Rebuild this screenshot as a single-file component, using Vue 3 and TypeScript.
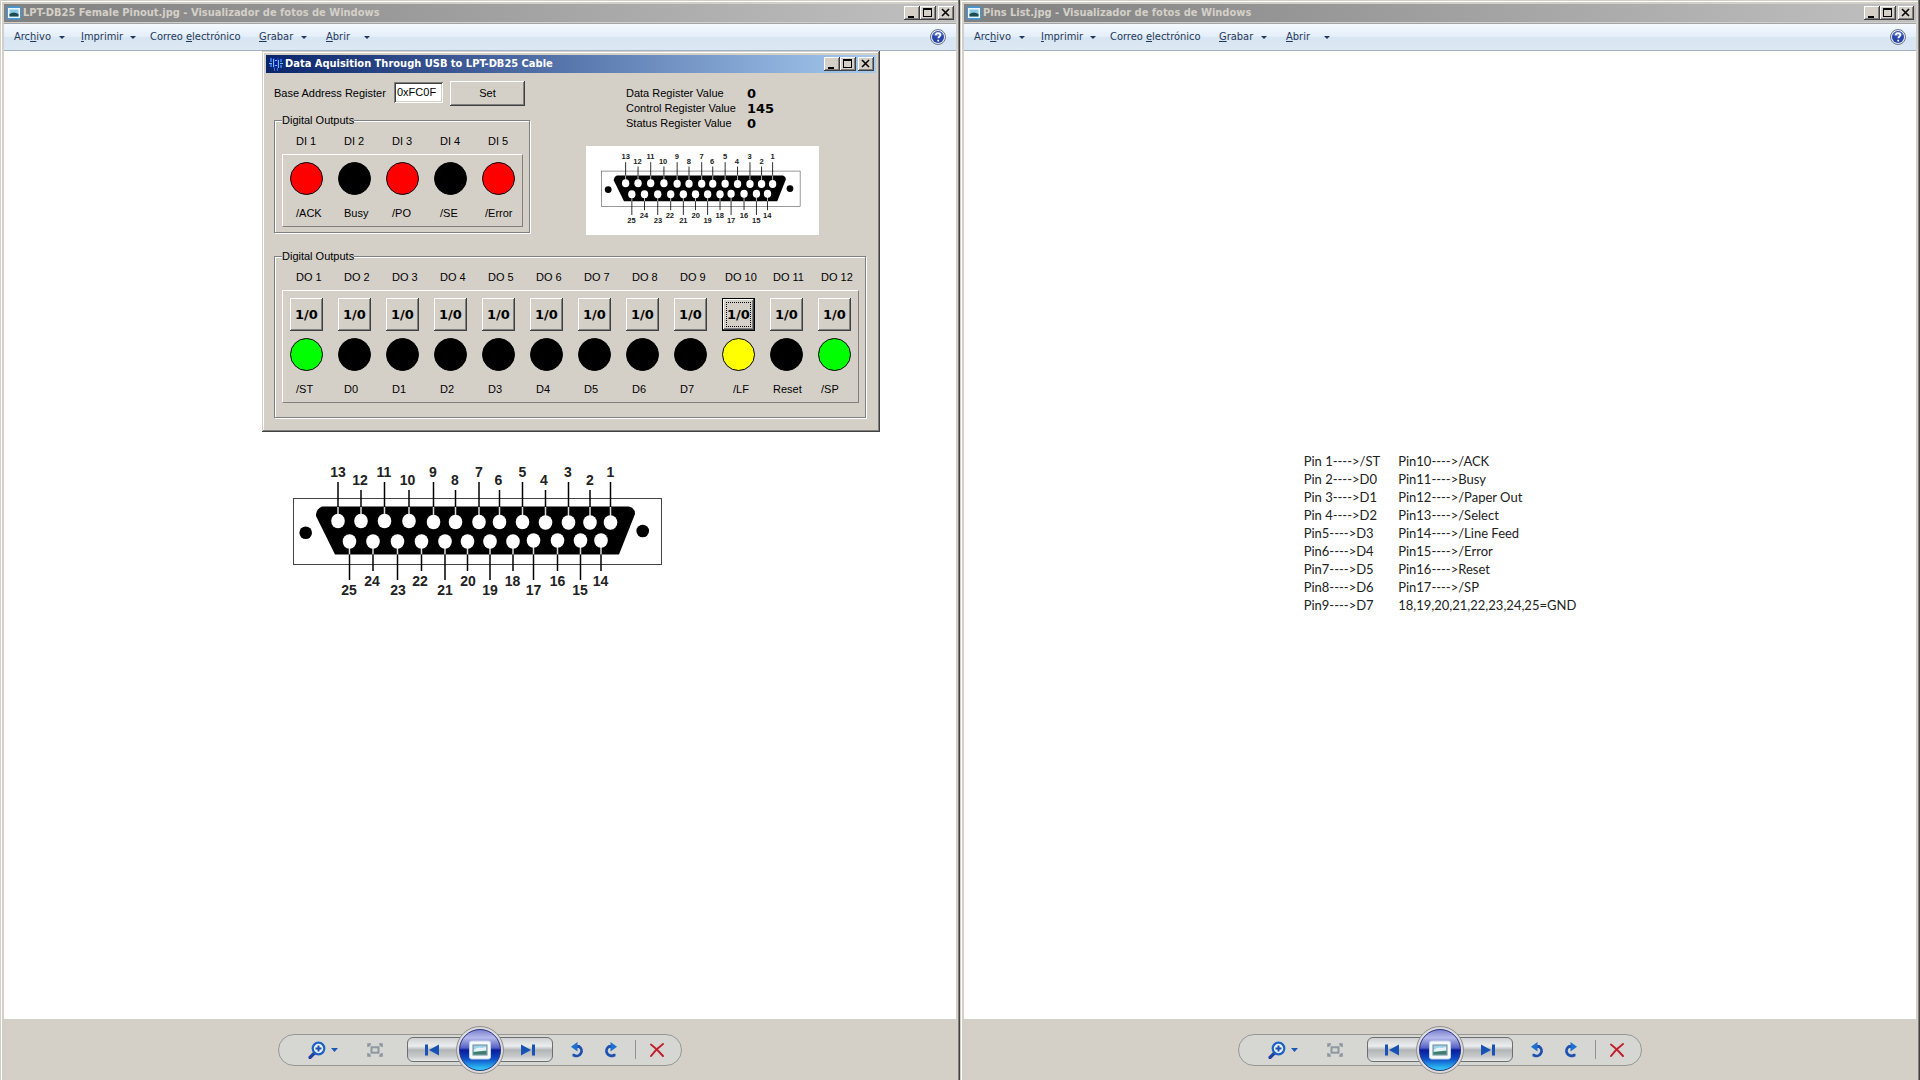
<script setup lang="ts">
import { h, ref } from 'vue'

interface Viewer { file: string; kind: 'connector' | 'list' }
interface MenuEntry { before: string; key: string; after: string; drop: boolean; cls: string }
interface Channel { name: string; caption: string; color: string; nameCls?: string; captionCls?: string }
interface Pin { n: number; x: number; y: number; tx: number }

const viewers: Viewer[] = [
  { file: 'LPT-DB25 Female Pinout.jpg', kind: 'connector' },
  { file: 'Pins List.jpg', kind: 'list' },
]

const menus: MenuEntry[] = [
  { before: 'Arc', key: 'h', after: 'ivo', drop: true, cls: 'm-file' },
  { before: '', key: 'I', after: 'mprimir', drop: true, cls: 'm-print' },
  { before: 'Correo ', key: 'e', after: 'lectrónico', drop: false, cls: 'm-mail' },
  { before: '', key: 'G', after: 'rabar', drop: true, cls: 'm-burn' },
  { before: '', key: 'A', after: 'brir', drop: true, cls: 'm-open' },
]

const pinRows: [string, string][] = [
  ['Pin 1---->/ST', 'Pin10---->/ACK'],
  ['Pin 2---->D0', 'Pin11---->Busy'],
  ['Pin 3---->D1', 'Pin12---->/Paper Out'],
  ['Pin 4---->D2', 'Pin13---->/Select'],
  ['Pin5---->D3', 'Pin14---->/Line Feed'],
  ['Pin6---->D4', 'Pin15---->/Error'],
  ['Pin7---->D5', 'Pin16---->Reset'],
  ['Pin8---->D6', 'Pin17---->/SP'],
  ['Pin9---->D7', '18,19,20,21,22,23,24,25=GND'],
]

const baseAddress = ref('0xFC0F')

const registers = [
  { name: 'Data Register Value', value: 0 },
  { name: 'Control Register Value', value: 145 },
  { name: 'Status Register Value', value: 0 },
]

const inputs: Channel[] = [
  { name: 'DI 1', caption: '/ACK', color: 'red' },
  { name: 'DI 2', caption: 'Busy', color: 'black' },
  { name: 'DI 3', caption: '/PO', color: 'red' },
  { name: 'DI 4', caption: '/SE', color: 'black' },
  { name: 'DI 5', caption: '/Error', color: 'red', captionCls: 'tight' },
]

const outputs: Channel[] = [
  { name: 'DO 1', caption: '/ST', color: 'lime' },
  ...[2, 3, 4, 5, 6, 7, 8, 9].map((n) => ({ name: `DO ${n}`, caption: `D${n - 2}`, color: 'black' })),
  { name: 'DO 10', caption: '/LF', color: 'yellow', nameCls: 'tight', captionCls: 'late' },
  { name: 'DO 11', caption: 'Reset', color: 'black', nameCls: 'tight', captionCls: 'tight' },
  { name: 'DO 12', caption: '/SP', color: 'lime', nameCls: 'tight', captionCls: 'tight' },
]
const focused = 'DO 10'

const topPins: Pin[] = [
  { n: 13, x: 58, y: 71, tx: 58 }, { n: 12, x: 81, y: 71, tx: 80 }, { n: 11, x: 104.5, y: 71, tx: 104 },
  { n: 10, x: 129, y: 71, tx: 127.5 }, { n: 9, x: 153.5, y: 72, tx: 153 }, { n: 8, x: 175.5, y: 72, tx: 175 },
  { n: 7, x: 199, y: 72, tx: 199 }, { n: 6, x: 219.5, y: 72, tx: 218.5 }, { n: 5, x: 242.5, y: 72, tx: 242.5 },
  { n: 4, x: 265.5, y: 72.5, tx: 264 }, { n: 3, x: 288.5, y: 72.5, tx: 288 }, { n: 2, x: 310, y: 72.5, tx: 310 },
  { n: 1, x: 330.5, y: 72.5, tx: 330.5 },
]
const bottomPins: Pin[] = [
  { n: 25, x: 69.5, y: 91.5, tx: 69 }, { n: 24, x: 93, y: 91.5, tx: 92 }, { n: 23, x: 117.5, y: 91.5, tx: 118 },
  { n: 22, x: 141.5, y: 91.5, tx: 140 }, { n: 21, x: 165, y: 91.5, tx: 165 }, { n: 20, x: 187.5, y: 91.5, tx: 188 },
  { n: 19, x: 210, y: 91.5, tx: 210 }, { n: 18, x: 233, y: 91.5, tx: 232.5 }, { n: 17, x: 253.5, y: 90.5, tx: 253.5 },
  { n: 16, x: 277.5, y: 90.5, tx: 277.5 }, { n: 15, x: 300.5, y: 90.5, tx: 300 }, { n: 14, x: 321, y: 90.5, tx: 320.5 },
]

// DB25 female connector drawing, shared by the photo and the thumbnail in the panel
const Db25 = (props: { box: string }) => {
  const wire = (x: number, y1: number, y2: number, stroke: string) =>
    h('line', { x1: x, x2: x, y1, y2, stroke, 'stroke-width': 1.5 })
  const label = (p: Pin, y: number) =>
    h('text', { x: p.tx, y, 'text-anchor': 'middle', 'font-size': 14, 'font-weight': 'bold', 'font-family': '"Liberation Sans", Arial, sans-serif', fill: '#222' }, String(p.n))
  const hole = (p: Pin) => h('ellipse', { cx: p.x, cy: p.y, rx: 6.8, ry: 7.3, fill: '#fff' })
  return h('svg', { viewBox: props.box, role: 'img', 'aria-label': 'DB25' }, [
    h('rect', { x: 13.5, y: 48.5, width: 368, height: 66, fill: 'none', stroke: '#444', 'stroke-width': 1 }),
    h('circle', { cx: 25.7, cy: 82.7, r: 6.3 }),
    h('circle', { cx: 362.7, cy: 81, r: 6.3 }),
    h('path', { d: 'M42 56.5H349Q355 58 355 64L339 104.5H55L36 66Q36 59 42 56.5Z' }),
    ...topPins.flatMap((p) => [
      wire(p.x, p.n % 2 ? 32 : 40, 57, '#000'), wire(p.x, 57, p.y, '#ddd'), hole(p), label(p, p.n % 2 ? 27 : 35),
    ]),
    ...bottomPins.flatMap((p) => [
      wire(p.x, p.y, 104.5, '#ddd'), wire(p.x, 104.5, p.n % 2 ? 130 : 121, '#000'), hole(p), label(p, p.n % 2 ? 145 : 136),
    ]),
  ])
}
Db25.props = ['box']
</script>

<template>
  <main class="desktop">
    <section v-for="v in viewers" :key="v.file" class="viewer">
      <header class="titlebar inactive">
        <svg class="title-icon" viewBox="0 0 16 16" aria-hidden="true">
          <rect x="1" y="1.5" width="14" height="13" rx="1" fill="#3d9ae0" />
          <rect x="2" y="3" width="12" height="10" fill="#eef6fb" />
          <rect x="3.5" y="4.5" width="9" height="7" fill="#8cc8e6" />
          <path d="M3.5 11.5V9q4-3 9 0v2.5z" fill="#1f4a50" />
        </svg>
        <h1>{{ v.file }} - Visualizador de fotos de Windows</h1>
        <button class="cap" type="button" aria-label="Minimizar"><svg viewBox="0 0 16 14"><path d="M4 10h6v2H4z" /></svg></button>
        <button class="cap" type="button" aria-label="Maximizar"><svg viewBox="0 0 16 14"><path fill-rule="evenodd" d="M3 2h9v9H3zM4 4v6h7V4z" /></svg></button>
        <button class="cap close" type="button" aria-label="Cerrar"><svg viewBox="0 0 16 14"><path d="M4 3l7 7M11 3l-7 7" stroke="#000" stroke-width="1.6" /></svg></button>
      </header>
      <nav class="menubar">
        <button v-for="m in menus" :key="m.key" type="button" class="menu" :class="m.cls">
          <span>{{ m.before }}<u>{{ m.key }}</u>{{ m.after }}</span>
          <svg v-if="m.drop" class="caret" viewBox="0 0 6 3" aria-hidden="true"><path d="M0 0h6L3 3z" fill="#1e395b" /></svg>
        </button>
        <button type="button" class="help" aria-label="Ayuda">
          <svg viewBox="0 0 16 16">
            <circle cx="8" cy="8" r="7.5" fill="#e6e9f0" stroke="#6a7590" />
            <circle cx="8" cy="8" r="6" fill="#2746a8" />
            <path d="M3 6a5.5 5.5 0 0 1 10 0Q8 9 3 6Z" fill="#5a7bd0" />
            <path d="M5.8 6.3q.1-2.2 2.3-2.2 2.2.1 2.2 1.9 0 1-1 1.7-1 .7-1 1.6M8.2 10.8v1.6" fill="none" stroke="#fff" stroke-width="1.7" />
          </svg>
        </button>
      </nav>
      <div class="canvas">
        <Db25 v-if="v.kind === 'connector'" class="photo" box="0 0 400 170" />
        <table v-else class="pins">
          <tbody>
            <tr v-for="r in pinRows" :key="r[0]"><td>{{ r[0] }}</td><td>{{ r[1] }}</td></tr>
          </tbody>
        </table>
      </div>
      <footer class="toolbar">
        <div class="pill">
          <button type="button" class="tool zoom" aria-label="Zoom">
            <svg viewBox="0 0 30 18">
              <path d="M6.5 12L2 16.5" stroke="#22409c" stroke-width="3.2" stroke-linecap="round" />
              <circle cx="10.500" cy="7.5" r="5.8" fill="#e8f0f8" stroke="#1d62c4" stroke-width="2.2" />
              <path d="M10.5 4.5v6M7.5 7.5h6" stroke="#1a50b8" stroke-width="2" />
              <path d="M23 7h7l-3.5 4z" fill="#1d58b4" />
            </svg>
          </button>
          <button type="button" class="tool fit" aria-label="Ajustar">
            <svg viewBox="0 0 16 14" fill="none" stroke="#8d97a2" stroke-width="1.6">
              <rect x="4.5" y="4.3" width="7" height="5.4" stroke-width="2" />
              <path d="M1 4V1h3M12 1h3v3M15 10v3h-3M4 13H1v-3M1 1l2 2M15 1l-2 2M15 13l-2-2M1 13l2-2" />
            </svg>
          </button>
          <div class="nav">
            <button type="button" class="seg prev" aria-label="Anterior">
              <svg viewBox="0 0 14 12"><path d="M0 .5h3v11H0zM14 .5v11L4 6z" fill="#1752b5" /></svg>
            </button>
            <button type="button" class="orb" aria-label="Presentación">
              <svg viewBox="0 0 50 50">
                <defs>
                  <linearGradient id="ball" x1="0" y1="0" x2="0" y2="1">
                    <stop offset="0" stop-color="#7a7fd0" /><stop offset=".2" stop-color="#b5b9ea" />
                    <stop offset=".45" stop-color="#5560c4" /><stop offset=".5" stop-color="#0a1c9a" />
                    <stop offset=".72" stop-color="#0d4fc8" /><stop offset="1" stop-color="#35d8ff" />
                  </linearGradient>
                </defs>
                <circle cx="25" cy="25" r="23.5" fill="#d9dad9" stroke="#8e8f92" />
                <circle cx="25" cy="25" r="20.5" fill="url(#ball)" stroke="#2a3484" />
                <rect x="14.5" y="16" width="21" height="18" rx="2" fill="#f6f9fc" stroke="#c4d2e6" />
                <rect x="18" y="20" width="14" height="10" fill="#9fd0ea" stroke="#6b8c96" />
                <path d="M18.500 29.5V27q6-1 13-1v3.5z" fill="#3f7d6a" />
                <path d="M19 25q4-3.5 8-2l4-1v3q-5 1-12 1.500z" fill="#e8f4f8" />
              </svg>
            </button>
            <button type="button" class="seg next" aria-label="Siguiente">
              <svg viewBox="0 0 14 12"><path d="M11 .5h3v11h-3zM0 .5v11L10 6z" fill="#1752b5" /></svg>
            </button>
          </div>
          <button type="button" class="tool ccw" aria-label="Girar a la izquierda">
            <svg viewBox="0 0 14 16"><path d="M4 4.500H8A4.7 4.7 0 1 1 3 13.2H1.5" fill="none" stroke="#1f50b0" stroke-width="2.8" /><path d="M0 4.8L6.5 0v9.5z" fill="#1e70d0" /></svg>
          </button>
          <button type="button" class="tool cw" aria-label="Girar a la derecha">
            <svg viewBox="0 0 14 16"><path d="M10 4.5H6A4.7 4.7 0 1 0 11 13.2H12.5" fill="none" stroke="#1f50b0" stroke-width="2.8" /><path d="M14 4.8L7.5 0v9.5z" fill="#1e70d0" /></svg>
          </button>
          <span class="rule"></span>
          <button type="button" class="tool del" aria-label="Eliminar">
            <svg viewBox="0 0 14 14"><path d="M1 1.5Q7 6 13 13M13 1Q6 6 1 13" fill="none" stroke="#c0202c" stroke-width="2" stroke-linecap="round" /></svg>
          </button>
        </div>
      </footer>
    </section>

    <section class="panel-window">
      <header class="titlebar active">
        <svg class="title-icon" viewBox="0 0 16 16" fill="none" aria-hidden="true">
          <path d="M2 2h2v4H2zM2 8h2v3H2zM12 3h2v3h-2zM12 9h2v3h-2zM6 12h1v3H6zM9 12h1v3H9z" fill="#2f6fe0" />
          <rect x="5" y="2" width="2" height="10" fill="#1530d8" /><rect x="9" y="2" width="2" height="10" fill="#1530d8" />
          <path d="M7 4.5h2M7 9.500h2M5.5 3v8M10.5 4v8M1 7.5h3M12 7.5h3" stroke="#6fc0ff" />
        </svg>
        <h1>Data Aquisition Through USB to LPT-DB25 Cable</h1>
        <button class="cap" type="button" aria-label="Minimize"><svg viewBox="0 0 16 14"><path d="M4 10h6v2H4z" /></svg></button>
        <button class="cap" type="button" aria-label="Maximize"><svg viewBox="0 0 16 14"><path fill-rule="evenodd" d="M3 2h9v9H3zM4 4v6h7V4z" /></svg></button>
        <button class="cap close" type="button" aria-label="Close"><svg viewBox="0 0 16 14"><path d="M4 3l7 7M11 3l-7 7" stroke="#000" stroke-width="1.6" /></svg></button>
      </header>
      <div class="client">
        <div class="upper">
          <div class="left">
            <form class="address" @submit.prevent>
              <label for="base">Base Address Register</label>
              <input id="base" v-model="baseAddress" type="text" />
              <button type="submit" class="btn set">Set</button>
            </form>
            <fieldset class="group">
              <legend>Digital Outputs</legend>
              <div class="names">
                <span v-for="c in inputs" :key="c.name" :class="c.nameCls">{{ c.name }}</span>
              </div>
              <div class="bay">
                <div v-for="c in inputs" :key="c.name" class="channel">
                  <i class="led" :class="c.color"></i>
                  <span class="caption" :class="c.captionCls">{{ c.caption }}</span>
                </div>
              </div>
            </fieldset>
          </div>
          <div class="right">
            <dl class="registers">
              <template v-for="r in registers" :key="r.name">
                <dt>{{ r.name }}</dt><dd>{{ r.value }}</dd>
              </template>
            </dl>
            <Db25 class="thumb" box="-15 2 431 165" />
          </div>
        </div>
        <fieldset class="group tall">
          <legend>Digital Outputs</legend>
          <div class="names">
            <span v-for="c in outputs" :key="c.name" :class="c.nameCls">{{ c.name }}</span>
          </div>
          <div class="bay">
            <div v-for="c in outputs" :key="c.name" class="channel">
              <button type="button" class="btn toggle" :class="{ focused: c.name === focused }" :aria-label="c.name">1/0</button>
              <i class="led" :class="c.color"></i>
              <span class="caption" :class="c.captionCls">{{ c.caption }}</span>
            </div>
          </div>
        </fieldset>
      </div>
    </section>
  </main>
</template>

<style>
body {
  margin: 0;
  background: #d4d0c8;
}
</style>

<style scoped>
* {
  box-sizing: border-box;
}
button,
input {
  margin: 0;
  padding: 0;
  border: 0;
  border-radius: 0;
  background: none;
  font: inherit;
  color: inherit;
}
svg {
  display: block;
}
.desktop {
  position: relative;
  display: grid;
  grid-template-columns: 1fr 1fr;
  min-height: 100vh;
  font: 11px/14px "Liberation Sans", Arial, sans-serif;
  color: #000;
}
.viewer {
  display: flex;
  flex-direction: column;
  padding: 4px 4px 0;
  background: #d4d0c8;
  box-shadow: inset -1px 0 #404040, inset -2px 0 #808080, inset 0 1px #d4d0c8, inset 1px 0 #d4d0c8, inset 2px 2px #fff;
}
.titlebar {
  display: flex;
  align-items: center;
  height: 18px;
  padding: 0 2px;
}
.inactive {
  background: linear-gradient(to right, #808080, #c0c0c0);
  color: #d4d0c8;
}
.active {
  background: linear-gradient(to right, #0a246a, #a6caf0);
  color: #fff;
}
.title-icon {
  width: 16px;
  height: 16px;
  margin-right: 1px;
}
.titlebar h1 {
  flex: 1;
  margin: 0;
  font: bold 11px/18px "DejaVu Sans Condensed", "DejaVu Sans", sans-serif;
  white-space: nowrap;
}
.cap {
  width: 16px;
  height: 14px;
  background: #d4d0c8;
  box-shadow: inset -1px -1px #404040, inset 1px 1px #fff, inset -2px -2px #808080;
}
.cap svg {
  width: 16px;
  height: 14px;
}
.close {
  margin-left: 2px;
}
.menubar {
  display: flex;
  align-items: center;
  height: 28px;
  margin-top: 1px;
  padding: 0 10px;
  border-top: 1px solid #a0a4ac;
  border-bottom: 1px solid #a3b1c6;
  background: linear-gradient(#f6faff, #e4eefa 48%, #d8e5f2 50%, #dbe8f4);
  color: #1e395b;
  font: 11px/16px "DejaVu Sans Condensed", "DejaVu Sans", sans-serif;
}
.menu {
  display: flex;
  align-items: center;
  justify-content: space-between;
  white-space: nowrap;
}
.m-file {
  width: 51px;
  margin-right: 16px;
}
.m-print {
  width: 55px;
  margin-right: 14px;
}
.m-mail {
  width: 90px;
  margin-right: 19px;
}
.m-burn {
  width: 48px;
  margin-right: 19px;
}
.m-open {
  width: 44px;
}
.caret {
  width: 6px;
  height: 3px;
}
.help {
  margin-left: auto;
}
.help svg {
  width: 16px;
  height: 16px;
}
.canvas {
  flex: 1;
  display: flex;
  align-items: center;
  justify-content: center;
  background: #fff;
}
.photo {
  width: 400px;
  height: 170px;
}
.pins {
  margin-bottom: 4px;
  border-collapse: collapse;
  font: 13px/18px Lato, Carlito, sans-serif;
  color: #222;
  white-space: nowrap;
}
.pins td {
  padding: 0;
}
.pins td:first-child {
  padding-right: 18px;
}
.toolbar {
  display: flex;
  align-items: center;
  justify-content: center;
  height: 61px;
}
.pill {
  display: flex;
  align-items: center;
  width: 404px;
  height: 32px;
  border: 1px solid #979894;
  border-radius: 16px;
  background: #d6d7d2;
}
.zoom {
  margin-left: 29px;
}
.zoom svg {
  width: 30px;
  height: 18px;
}
.fit {
  margin-left: 29px;
}
.fit svg {
  width: 16px;
  height: 14px;
}
.nav {
  display: flex;
  align-items: center;
  margin-left: 24px;
}
.seg {
  display: flex;
  align-items: center;
  width: 54px;
  height: 25px;
  border: 1px solid #6c6d70;
  background: linear-gradient(#cfd0d2, #eceded 35%, #b2b4b6 52%, #c8cacb 80%, #e8e9e9);
}
.seg svg {
  width: 14px;
  height: 12px;
}
.prev {
  padding-left: 17px;
  border-radius: 6px 0 0 6px;
}
.next {
  justify-content: flex-end;
  padding-right: 17px;
  border-radius: 0 6px 6px 0;
}
.orb {
  z-index: 1;
  margin: 0 -6px;
}
.orb svg {
  width: 50px;
  height: 50px;
}
.ccw {
  margin-left: 18px;
}
.cw {
  margin-left: 18px;
}
.ccw svg,
.cw svg {
  width: 14px;
  height: 16px;
}
.rule {
  width: 1px;
  height: 19px;
  margin-left: 18px;
  background: #8f9194;
}
.del {
  margin-left: 14px;
}
.del svg {
  width: 14px;
  height: 14px;
}
.panel-window {
  position: absolute;
  left: 262px;
  top: 51px;
  padding: 4px;
  background: #d4d0c8;
  box-shadow: inset -1px -1px #404040, inset 1px 1px #d4d0c8, inset -2px -2px #808080, inset 2px 2px #fff;
}
.client {
  padding: 8px 10px 10px 8px;
}
.upper {
  display: flex;
  gap: 56px;
  margin-bottom: 14px;
}
.address {
  display: flex;
  align-items: center;
  gap: 7px;
  margin-bottom: 7px;
}
.address label {
  width: 113px;
  padding-bottom: 2px;
}
.address input {
  width: 49px;
  height: 21px;
  margin-bottom: 2px;
  padding: 0 3px 2px;
  background: #fff;
  box-shadow: inset 1px 1px #808080, inset -1px -1px #fff, inset 2px 2px #404040, inset -2px -2px #d4d0c8;
}
.btn {
  background: #d4d0c8;
  box-shadow: inset -1px -1px #404040, inset 1px 1px #fff, inset -2px -2px #808080;
}
.set {
  width: 75px;
  height: 25px;
  padding-bottom: 2px;
}
.group {
  width: 256px;
  min-width: 0;
  margin: 0;
  padding: 7px 6px 5px 7px;
  border: 1px solid #808080;
  box-shadow: 1px 1px #fff, inset 1px 1px #fff;
}
.tall {
  width: 592px;
  padding-bottom: 14px;
}
.group legend {
  height: 14px;
  padding: 0;
  background: #d4d0c8;
}
.names {
  display: flex;
  gap: 15px;
  margin-bottom: 6px;
  padding: 0 8px;
}
.names span {
  width: 33px;
  padding-left: 6px;
  white-space: nowrap;
}
.bay {
  display: flex;
  gap: 15px;
  padding: 7px 7px 6px;
  border: 1px solid;
  border-color: #fff #808080 #808080 #fff;
}
.channel {
  display: flex;
  flex-direction: column;
  gap: 7px;
  width: 33px;
}
.led {
  width: 33px;
  height: 33px;
  border: 1px solid #000;
  border-radius: 50%;
}
.red {
  background: #f00;
}
.black {
  background: #000;
}
.lime {
  background: #0f0;
}
.yellow {
  background: #ff0;
}
.caption {
  margin-top: 4px;
  padding-left: 6px;
}
.names .tight,
.caption.tight {
  padding-left: 3px;
}
.caption.late {
  padding-left: 11px;
}
.toggle {
  width: 33px;
  height: 33px;
  font: bold 13px/16px "DejaVu Sans", Verdana, sans-serif;
}
.focused {
  border: 1px solid #000;
  outline: 1px dotted #000;
  outline-offset: -5px;
}
.right {
  padding-top: 5px;
}
.registers {
  display: grid;
  grid-template-columns: 121px auto;
  grid-auto-rows: 15px;
  margin: 0 0 15px 40px;
  line-height: 15px;
}
.registers dd {
  margin: 0;
  font: bold 13px/15px "DejaVu Sans", Verdana, sans-serif;
}
.thumb {
  width: 233px;
  height: 89px;
  background: #fff;
}
</style>
